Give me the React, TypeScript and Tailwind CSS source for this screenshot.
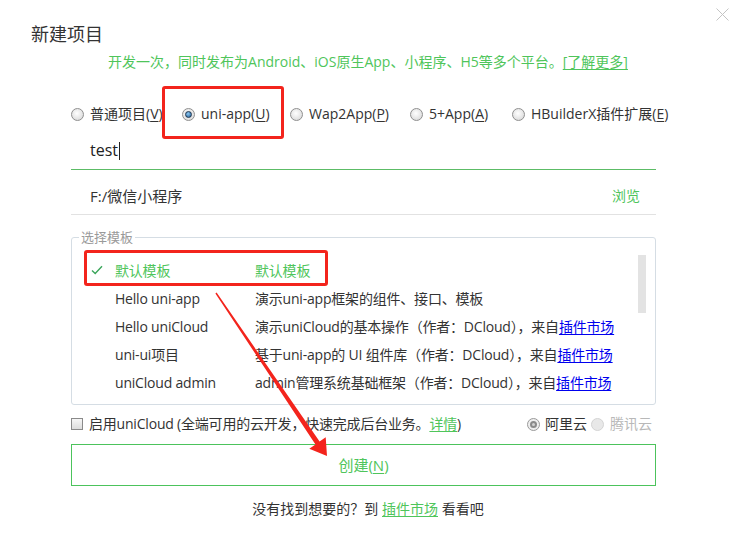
import React from "react";

const G = "text-[#4fc55b]";

function Radio({ checked = false }: { checked?: boolean }) {
  return (
    <span className="w-[13px] h-[13px] rounded-full border border-[#8f8f8f] bg-[radial-gradient(circle_at_45%_40%,#ffffff,#d2d2d2)] flex items-center justify-center shrink-0">
      {checked && (
        <span className="w-[7px] h-[7px] rounded-full border border-[#1d3550] bg-[radial-gradient(circle_at_40%_35%,#8cc8f2,#1f5a92)]" />
      )}
    </span>
  );
}

function U({ c }: { c: string }) {
  return <span className="underline underline-offset-2">{c}</span>;
}

const rows = [
  { a: "Hello uni-app", b: "演示uni-app框架的组件、接口、模板", link: false },
  { a: "Hello uniCloud", b: "演示uniCloud的基本操作（作者：DCloud），来自", link: true },
  { a: "uni-ui项目", b: "基于uni-app的 UI 组件库（作者：DCloud），来自", link: true },
  { a: "uniCloud admin", b: "admin管理系统基础框架（作者：DCloud），来自", link: true },
];

export default function App() {
  return (
    <div className="relative w-[736px] h-[535px] bg-white overflow-hidden font-['Open_Sans','Noto_Sans_CJK_SC',sans-serif] text-[#333]">
      <div className="absolute left-[716px] top-[8px]">
        <svg width="13" height="13" viewBox="0 0 13 13">
          <path d="M0.5 0.5 L12.5 12.5 M12.5 0.5 L0.5 12.5" stroke="#c4c4c4" strokeWidth="1" fill="none" />
        </svg>
      </div>

      <div className="pl-[31px] pt-[22px] text-[18px] leading-[24px] text-[#333]">新建项目</div>
      <div className={`mt-[6px] text-center text-[14px] leading-[20px] ${G}`}>
        开发一次，同时发布为Android、iOS原生App、小程序、H5等多个平台。
        <span className="underline underline-offset-2">[了解更多]</span>
      </div>

      <div className="ml-[71px] w-[585px]">
        <div className="mt-[32px] h-[20px] flex items-center text-[14px] leading-[20px] text-[#333] whitespace-nowrap">
          <div className="w-[111px] shrink-0 flex items-center gap-[6px]">
            <Radio />
            <span>普通项目(<U c="V" />)</span>
          </div>
          <div className="w-[108px] shrink-0 flex items-center gap-[6px]">
            <Radio checked />
            <span>uni-app(<U c="U" />)</span>
          </div>
          <div className="w-[120px] shrink-0 flex items-center gap-[6px]">
            <Radio />
            <span>Wap2App(<U c="P" />)</span>
          </div>
          <div className="w-[102px] shrink-0 flex items-center gap-[6px]">
            <Radio />
            <span>5+App(<U c="A" />)</span>
          </div>
          <div className="flex items-center gap-[6px]">
            <Radio />
            <span>HBuilderX插件扩展(<U c="E" />)</span>
          </div>
        </div>

        <div className="h-[46px] border-b border-[#5cbc66] flex items-end pb-[9px] pl-[19px] text-[16px] leading-[20px] text-[#222]">
          <span>test</span>
          <span className="w-px h-[18px] bg-[#222] ml-[1px]" />
        </div>

        <div className="h-[45px] border-b border-[#e2e2e2] flex items-end justify-between pb-[8px] pl-[19px] pr-[16px] leading-[20px]">
          <span className="text-[15px] text-[#333]">F:/微信小程序</span>
          <span className={`text-[14px] ${G}`}>浏览</span>
        </div>

        <fieldset className="mt-[14px] border border-[#d5dde4] rounded-[3px] pt-[11px] pb-[8px]">
          <legend className="ml-[7px] px-[2px] text-[13px] leading-[16px] text-[#9a9a9a]">选择模板</legend>
          <div className="flex">
            <div className="flex-1 text-[14px] tracking-[-0.2px]">
              <div className="h-[28px] flex items-center">
                <div className="w-[43px] pl-[19px] flex items-center">
                  <svg width="12" height="10" viewBox="0 0 12 10">
                    <path d="M1 5.5 L4.2 8.5 L11 1.2" stroke="#3aa55a" strokeWidth="1.4" fill="none" />
                  </svg>
                </div>
                <div className={`w-[140px] ${G}`}>默认模板</div>
                <div className={G}>默认模板</div>
              </div>
              {rows.map((r) => (
                <div key={r.a} className="h-[28px] flex items-center">
                  <div className="w-[43px]" />
                  <div className="w-[140px] text-[#333]">{r.a}</div>
                  <div className="text-[#333] whitespace-nowrap">
                    {r.b}
                    {r.link && <span className="text-[#0000ee] underline underline-offset-2">插件市场</span>}
                  </div>
                </div>
              ))}
            </div>
            <div className="w-[8px] mr-[9px] -mt-[1px]">
              <div className="h-[58px] bg-[#e3e3e3]" />
            </div>
          </div>
        </fieldset>

        <div className="mt-[9px] h-[20px] flex items-center justify-between text-[14px] leading-[20px]">
          <div className="flex items-center">
            <span className="w-[12px] h-[12px] border border-[#8a8a8a] bg-[linear-gradient(#f6f6f6,#dcdcdc)] shrink-0" />
            <span className="ml-[6px] whitespace-nowrap text-[#333] tracking-[-0.2px]">
              启用uniCloud (全端可用的云开发，快速完成后台业务。<span className={`${G} underline underline-offset-2`}>详情</span>)
            </span>
          </div>
          <div className="flex items-center pr-[4px] whitespace-nowrap">
            <span className="w-[13px] h-[13px] rounded-full border border-[#9a9a9a] bg-[#eeeeee] flex items-center justify-center">
              <span className="w-[7px] h-[7px] rounded-full border-2 border-[#8a8a8a] bg-[#d0d0d0]" />
            </span>
            <span className="ml-[5px] text-[#333]">阿里云</span>
            <span className="ml-[4px] w-[13px] h-[13px] rounded-full border border-[#d4d4d4] bg-[#e8e8e8]" />
            <span className="ml-[6px] text-[#b8b8b8]">腾讯云</span>
          </div>
        </div>

        <div className={`mt-[10px] h-[42px] border border-[#4cc35c] flex items-center justify-center text-[15px] ${G}`}>
          创建(<U c="N" />)
        </div>
      </div>

      <div className="mt-[13px] text-center text-[14px] leading-[20px] text-[#333]">
        没有找到想要的？到 <span className={`${G} underline underline-offset-2`}>插件市场</span> 看看吧
      </div>

      <div className="absolute left-[162px] top-[86px] w-[122px] h-[53px] border-[3px] border-[#f3241c] rounded-[3px] pointer-events-none" />
      <div className="absolute left-[84px] top-[250px] w-[244px] h-[36px] border-[3px] border-[#f3241c] rounded-[3px] pointer-events-none" />

      <svg className="absolute left-0 top-0 pointer-events-none" width="736" height="535">
        <polygon
          points="216.6,292.5 319.6,441.6 325.7,437.2 327,456 309.3,448.8 315.5,444.4 215.4,293.5"
          fill="#f3241c"
        />
      </svg>
    </div>
  );
}
